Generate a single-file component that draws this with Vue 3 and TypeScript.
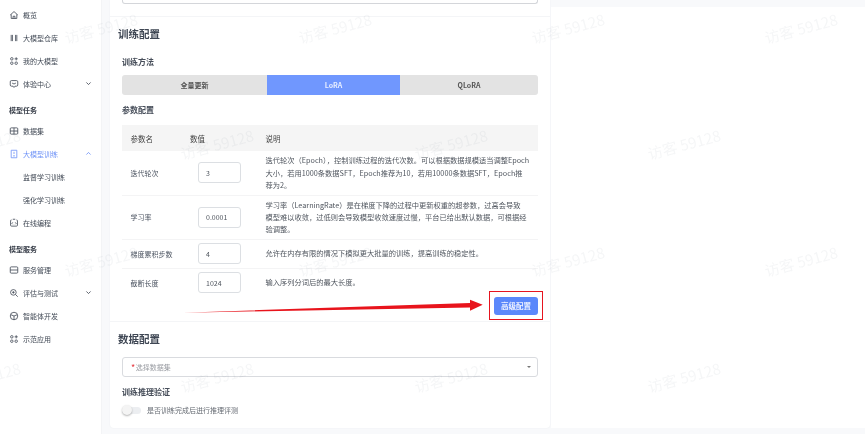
<script setup lang="ts">
type NavItem = { label: string; icon?: string; arrow?: 'up' | 'down'; active?: boolean; sub?: boolean; title?: boolean }

const icons: Record<string, string> = {
  home: 'M2 8 L8 2.5 L14 8 M3.5 7 V13.5 H12.5 V7 M6.5 13.5 V10 H9.5 V13.5',
  bars: 'M3.5 3 V13 M5.5 3 V13 M10.5 3 V13 M12.5 3 V13',
  grid: 'M4.5 2.5 A2 2 0 1 0 4.5 6.5 A2 2 0 1 0 4.5 2.5 Z M4.5 9.5 A2 2 0 1 0 4.5 13.5 A2 2 0 1 0 4.5 9.5 Z M11.5 9.5 A2 2 0 1 0 11.5 13.5 A2 2 0 1 0 11.5 9.5 Z M11.5 2 V7 M9 4.5 H14',
  chat: 'M4 2.5 H12 Q14 2.5 14 4.5 V9.5 Q14 11.5 12 11.5 H9.5 L8 13.5 L6.5 11.5 H4 Q2 11.5 2 9.5 V4.5 Q2 2.5 4 2.5 Z M5 6.5 Q8 9.5 11 6.5',
  table: 'M3.5 3 H12.5 Q14 3 14 4.5 V11.5 Q14 13 12.5 13 H3.5 Q2 13 2 11.5 V4.5 Q2 3 3.5 3 Z M2 8 H14 M8 3 V13',
  train: 'M3.5 2 H12.5 V14 H3.5 Z M8 4.5 V8 M6.5 11 H9.5',
  code: 'M4 3 Q2.5 3 2.5 4.5 V11.5 Q2.5 13 4 13 H12 Q13.5 13 13.5 11.5 V4.5 Q13.5 3 12 3 M6 2 H10 M6 7 L4.5 8.5 L6 10 M10 7 L11.5 8.5 L10 10',
  server: 'M3.5 3 H12.5 Q14 3 14 4.5 V11.5 Q14 13 12.5 13 H3.5 Q2 13 2 11.5 V4.5 Q2 3 3.5 3 Z M2 8 H14',
  search: 'M7 2.5 A4.5 4.5 0 1 0 7 11.5 A4.5 4.5 0 1 0 7 2.5 Z M10.5 10.5 L14 14 M5 7 H9 M7 5 V9',
  agent: 'M8 2 A6 6 0 1 0 8 14 A6 6 0 1 0 8 2 Z M3 6 L8 8 L13 6 M8 8 V14',
}

const navItems: NavItem[] = [
  { label: '概览', icon: 'home' },
  { label: '大模型仓库', icon: 'bars' },
  { label: '我的大模型', icon: 'grid' },
  { label: '体验中心', icon: 'chat', arrow: 'down' },
  { label: '模型任务', title: true },
  { label: '数据集', icon: 'table' },
  { label: '大模型训练', icon: 'train', arrow: 'up', active: true },
  { label: '监督学习训练', sub: true },
  { label: '强化学习训练', sub: true },
  { label: '在线编程', icon: 'code' },
  { label: '模型服务', title: true },
  { label: '服务管理', icon: 'server' },
  { label: '评估与测试', icon: 'search', arrow: 'down' },
  { label: '智能体开发', icon: 'agent' },
  { label: '示范应用', icon: 'grid' },
]

// 说明文字按原图换行
const params = [
  {
    name: '迭代轮次',
    value: '3',
    height: 44.5,
    lines: [
      '迭代轮次（Epoch），控制训练过程的迭代次数。可以根据数据规模适当调整Epoch',
      '大小，若用1000条数据SFT，Epoch推荐为10，若用10000条数据SFT，Epoch推',
      '荐为2。',
    ],
  },
  {
    name: '学习率',
    value: '0.0001',
    height: 44,
    lines: [
      '学习率（LearningRate）是在梯度下降的过程中更新权重的超参数，过高会导致',
      '模型难以收敛，过低则会导致模型收敛速度过慢，平台已给出默认数据，可根据经',
      '验调整。',
    ],
  },
  { name: '梯度累积步数', value: '4', height: 29, lines: ['允许在内存有限的情况下模拟更大批量的训练，提高训练的稳定性。'] },
  { name: '截断长度', value: '1024', height: 28, lines: ['输入序列分词后的最大长度。'] },
]

// 水印是交错排布的
const watermarks: { x: number; y: number }[] = []
for (const y of [28, 261]) for (const x of [101, 335, 568, 801]) watermarks.push({ x, y })
for (const y of [144, 377]) for (const x of [-16, 217, 451, 684]) watermarks.push({ x, y })
</script>

<template>
  <div class="page">
    <aside class="sidebar">
      <template v-for="item in navItems" :key="item.label">
        <div v-if="item.title" class="nav-title">{{ item.label }}</div>
        <div v-else class="nav-item" :class="{ active: item.active, sub: item.sub }">
          <svg v-if="item.icon" class="nav-icon" viewBox="0 0 16 16">
            <path :d="icons[item.icon]" />
          </svg>
          <span>{{ item.label }}</span>
          <svg v-if="item.arrow" class="nav-arrow" viewBox="0 0 10 10">
            <path :d="item.arrow === 'up' ? 'M2 6.5 L5 3.5 L8 6.5' : 'M2 3.5 L5 6.5 L8 3.5'" />
          </svg>
        </div>
      </template>
    </aside>

    <main class="content">
      <div class="card">
        <div class="top-stub"></div>

        <section class="block train-block">
          <h2>训练配置</h2>
          <h3>训练方法</h3>
          <div class="segments">
            <div class="segment">全量更新</div>
            <div class="segment selected">LoRA</div>
            <div class="segment">QLoRA</div>
          </div>
          <h3 class="params-title">参数配置</h3>
          <div class="table-head">
            <span>参数名</span>
            <span>数值</span>
            <span>说明</span>
          </div>
          <div class="table-body">
            <div v-for="p in params" :key="p.name" class="table-row" :style="{ height: p.height + 'px' }">
              <span>{{ p.name }}</span>
              <div class="num-input">{{ p.value }}</div>
              <p>
                <span v-for="line in p.lines" :key="line">{{ line }}</span>
              </p>
            </div>
          </div>
          <div class="actions">
            <button class="primary">高级配置</button>
          </div>
        </section>

        <section class="block data-block">
          <h2>数据配置</h2>
          <div class="select">
            <span class="star">*</span>
            <span>选择数据集</span>
            <i class="caret"></i>
          </div>
          <h3 class="verify-title">训练推理验证</h3>
          <div class="switch-row">
            <span class="switch"><i></i></span>
            <span>是否训练完成后进行推理评测</span>
          </div>
        </section>
      </div>
      <div class="right-panel"></div>
    </main>

    <!-- 标注：红框和箭头 -->
    <div class="mark-box"></div>
    <svg class="mark-arrow" width="865" height="434" viewBox="0 0 865 434">
      <polygon points="183,312.7 470,303 470,299.7 482.7,304.7 470,310.7 470,307.5" fill="#e8141c" />
    </svg>

    <div class="watermarks">
      <span v-for="(w, i) in watermarks" :key="i" class="watermark" :style="{ left: w.x + 'px', top: w.y + 'px' }">访客 59128</span>
    </div>
  </div>
</template>

<style scoped>
.page {
  position: relative;
  display: flex;
  width: 865px;
  height: 434px;
  overflow: hidden;
  background: #f8f9fb;
  color: #333a45;
  font-family: "Noto Sans CJK SC", "Noto Sans", sans-serif;
  filter: blur(0.45px);
}

.sidebar {
  width: 102px;
  flex-shrink: 0;
  padding-top: 3px;
  box-sizing: border-box;
  background: #fff;
  border-right: 1px solid #f3f4f6;
}

.nav-item {
  display: flex;
  align-items: center;
  height: 23px;
  padding: 0 9px;
  font-size: 7px;
  color: #414955;
}

.nav-item.sub {
  padding-left: 23px;
}

.nav-item.active {
  color: #6f93f7;
}

.nav-icon {
  width: 10px;
  height: 10px;
  margin-right: 4px;
  fill: none;
  stroke: currentColor;
  stroke-width: 1.3;
}

.nav-arrow {
  width: 7px;
  height: 7px;
  margin-left: auto;
  fill: none;
  stroke: currentColor;
  stroke-width: 1.2;
}

.nav-title {
  height: 17px;
  margin-top: 7px;
  padding-left: 9px;
  font-size: 7px;
  font-weight: 700;
  line-height: 16px;
  color: #3a404b;
}

.content {
  flex: 1;
  display: flex;
  padding: 0 0 6px 8px;
  min-width: 0;
}

.card {
  width: 440px;
  flex-shrink: 0;
  background: #fff;
  box-shadow: 0 0 2px rgba(40, 50, 70, 0.06);
  border-radius: 0 0 4px 4px;
}

.right-panel {
  flex: 1;
  margin-top: 7px;
  margin-left: 1px;
  background: #fff;
}

.top-stub {
  height: 4px;
  margin: 0 12px;
  border: 1px solid #d4d6da;
  border-top: none;
  border-radius: 0 0 3px 3px;
  box-sizing: border-box;
}

.block {
  padding: 0 12px;
}

.train-block {
  margin-top: 12px;
  height: 306px;
  border-top: 1px solid #f4f5f7;
  box-shadow: inset 0 -1px 0 #f4f5f7;
  box-sizing: border-box;
}

h2 {
  margin: 0 0 0 -4px;
  font-size: 10.5px;
  font-weight: 700;
  line-height: 16px;
  color: #3f4754;
}

.train-block h2 {
  padding-top: 9px;
}

h3 {
  margin: 0;
  font-size: 8px;
  font-weight: 700;
  line-height: 12px;
  color: #474e5a;
}

.train-block h3:first-of-type {
  margin-top: 14px;
}

.segments {
  display: grid;
  grid-template-columns: 145px 133px 1fr;
  height: 20px;
  margin-top: 7px;
  border-radius: 3px;
  overflow: hidden;
  background: #e3e3e3;
}

.segment {
  display: flex;
  align-items: center;
  justify-content: center;
  font-size: 7px;
  font-weight: 700;
  color: #555;
}

.segment.selected {
  background: #7097fe;
  color: #e8eeff;
}

.train-block h3.params-title {
  margin-top: 9px;
}

.table-head,
.table-row {
  display: grid;
  grid-template-columns: 59.5px 75.5px 1fr;
  align-items: center;
  padding-left: 8.5px;
  font-size: 7.5px;
  color: #555;
}

.table-head {
  height: 26px;
  margin-top: 9px;
  background: #f5f5f5;
  color: #444;
}

.table-row {
  box-sizing: border-box;
  border-bottom: 1px solid #f4f4f5;
  color: #4d5562;
  font-size: 7px;
}

.table-row:last-child {
  border-bottom: none;
}

.table-row p {
  margin: 0;
  font-size: 7.26px;
  line-height: 12.3px;
  color: #50565f;
}

.table-row p span {
  display: block;
  white-space: nowrap;
}

.num-input {
  display: flex;
  align-items: center;
  width: 43px;
  height: 21px;
  margin-left: 8px;
  padding-left: 7px;
  box-sizing: border-box;
  border: 1px solid #dcdfe3;
  border-radius: 3px;
  font-size: 7px;
  color: #50565f;
}

.actions {
  display: flex;
  justify-content: flex-end;
}

.primary {
  width: 44px;
  height: 18px;
  padding: 0;
  border: none;
  border-radius: 3px;
  background: #5b88fb;
  color: #eef2ff;
  font-family: inherit;
  font-size: 7.5px;
  font-weight: 700;
}

.data-block h2 {
  margin-top: 9px;
}

.select {
  display: flex;
  align-items: center;
  height: 20px;
  margin-top: 10px;
  padding: 0 6px 0 8px;
  box-sizing: border-box;
  border: 1px solid #d9dbdf;
  border-radius: 3px;
  font-size: 7px;
  color: #9a9da3;
}

.star {
  color: #e5383f;
  font-size: 9px;
  line-height: 9px;
  margin-right: 0.5px;
}

.caret {
  margin-left: auto;
  border: 2px solid transparent;
  border-top: 2.5px solid #777;
  border-bottom: none;
}

.verify-title {
  margin-top: 9px;
}

.switch-row {
  display: flex;
  align-items: center;
  gap: 6px;
  margin-top: 7px;
  font-size: 7px;
  color: #666b73;
}

.switch {
  position: relative;
  display: block;
  width: 19px;
  height: 7px;
  border-radius: 4px;
  background: #eceef1;
}

.switch i {
  position: absolute;
  left: 0;
  top: -1.5px;
  width: 10px;
  height: 10px;
  border-radius: 50%;
  background: #f4f4f4;
  box-shadow: 0 1px 2px rgba(0, 0, 0, 0.3);
}

.mark-box {
  position: absolute;
  left: 489px;
  top: 291px;
  width: 54px;
  height: 29px;
  box-sizing: border-box;
  border: 1.5px solid #e6141f;
}

.mark-arrow {
  position: absolute;
  left: 0;
  top: 0;
  pointer-events: none;
}

.watermarks {
  position: absolute;
  inset: 0;
  pointer-events: none;
}

.watermark {
  position: absolute;
  transform: translate(-50%, -50%) rotate(-15deg);
  font-size: 15px;
  white-space: nowrap;
  color: rgba(60, 70, 90, 0.05);
}
</style>
